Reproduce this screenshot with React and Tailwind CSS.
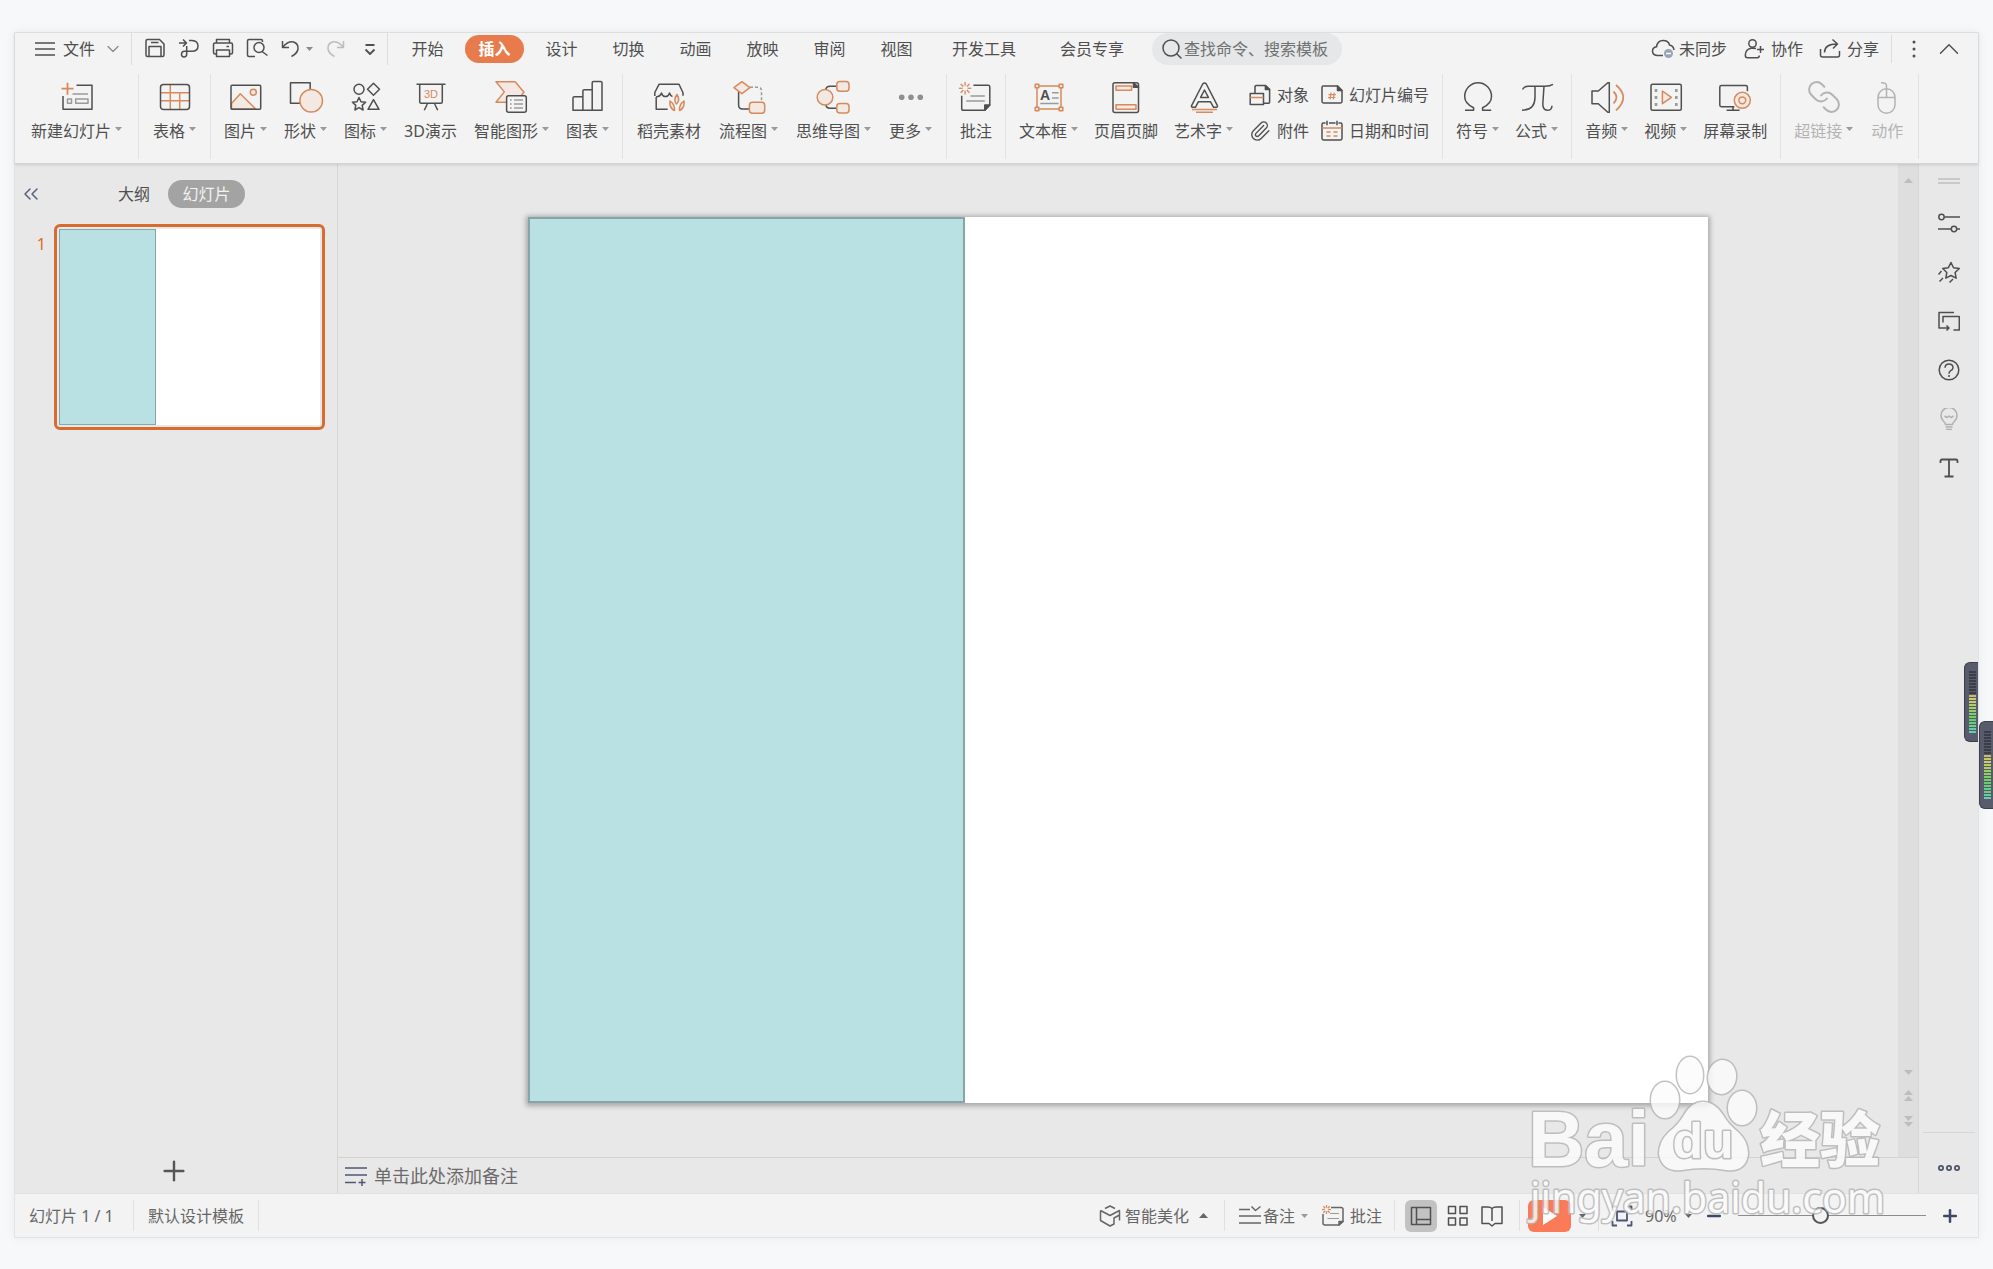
import React, { useState } from "react";
import { ChevronDown, ChevronUp, ChevronsLeft, Link, Paperclip, Plus, Minus, Search } from "lucide-react";

const Caret = ({ up, wide }) => (
  <svg
    width={wide ? 9 : 7}
    height={wide ? 5 : 4}
    viewBox="0 0 7 4"
    preserveAspectRatio="none"
    className={up ? "shrink-0 rotate-180" : "shrink-0"}
    fill="currentColor"
  >
    <path d="M0 0h7L3.5 4z" />
  </svg>
);

const Icon = ({ size = 36, children }) => (
  <svg
    width={size}
    height={size}
    viewBox={`0 0 ${size} ${size}`}
    className="shrink-0"
    fill="none"
    stroke="currentColor"
    strokeWidth="1.5"
    strokeLinejoin="round"
  >
    {children}
  </svg>
);

const orange = { stroke: "#d68a5e" };
const orangeFill = { stroke: "#d68a5e", fill: "#f3e8e2" };
const gray = { stroke: "#9a9a9a" };

const Sun = ({ x, y, r }) => (
  <g transform={`translate(${x} ${y})`} {...orange} strokeWidth="1.3">
    {[0, 45, 90, 135, 180, 225, 270, 315].map((a) => (
      <path key={a} d={`M${r * 0.4} 0H${r}`} transform={`rotate(${a})`} />
    ))}
  </g>
);

const icons = {
  newSlide: (
    <Icon>
      <path d="M17.5 6.3H33v24H4V17" />
      <path d="M8.5 3.7v12M2.5 9.7h12" {...orange} strokeWidth="1.8" />
      <path d="M13.5 15H29M8.5 20h4v4.3h-4zM16.7 20H29v4.3H16.7z" {...gray} />
    </Icon>
  ),
  table: (
    <Icon>
      <path d="M13.3 5.5v25M22.7 13.7v16.8M3.5 13.7h29M3.5 21.7h29" {...orange} />
      <rect x="3.5" y="5.5" width="29" height="25" rx="3" />
    </Icon>
  ),
  picture: (
    <Icon>
      <path d="M3.5 24.5l8.8-9.8 15.4 15.3H3.5z" {...orangeFill} />
      <circle cx="25.3" cy="13.3" r="3" {...orangeFill} />
      <rect x="3" y="6.3" width="29.7" height="24" rx="1" />
    </Icon>
  ),
  shape: (
    <Icon>
      <rect x="2.5" y="3.7" width="19.7" height="20.6" />
      <circle cx="23.2" cy="21.7" r="11.3" {...orangeFill} />
    </Icon>
  ),
  symbols: (
    <Icon>
      <circle cx="11" cy="10.3" r="5" />
      <path d="M25.5 4.3l6 6-6 6-6-6z" />
      <path d="M11 18.5l2 4.2 4.6.6-3.4 3.1.9 4.6-4.1-2.3-4.1 2.3.9-4.6-3.4-3.1 4.6-.6z" />
      <path d="M25.5 20.7l5.5 9.6H20z" />
    </Icon>
  ),
  board: (
    <Icon>
      <path d="M3.5 5.3h29M6.7 5.3v17.5q0 1.5 1.5 1.5h19.6q1.5 0 1.5-1.5V5.3M14.3 25l-3 6.3M21.7 25l3 6.3" />
      <text x="18" y="18.5" fontSize="11" textAnchor="middle" fontFamily="Liberation Sans, sans-serif" fill="#d68a5e" stroke="none">
        3D
      </text>
    </Icon>
  ),
  smart: (
    <Icon>
      <path d="M3 2.7h19.2l8.8 10.5-8 10.1H3l8.3-10.4z" {...orangeFill} />
      <rect x="13.6" y="16.7" width="19.7" height="16.5" rx="2" fill="#f4f4f4" />
      <path d="M17 21h1.7M21 21h9M17 25h1.7M21 25h9M17 29h1.7M21 29h9" {...gray} strokeWidth="1.3" />
    </Icon>
  ),
  chart: (
    <Icon>
      <path d="M4 31.3V19q0-1.3 1.3-1.3h8.6v13.6zM13.9 31.3V12q0-1.3 1.3-1.3h8v20.6zM23.2 31.3V3.7q0-1.3 1.3-1.3h7.2q1.3 0 1.3 1.3v27.6z" />
    </Icon>
  ),
  store: (
    <Icon>
      <path d="M3.8 17V13.5L8 5.3h20l4 8.4v3M5 18q4.500-.5 5.500-4 1 3.600 4 3.600t4-3.600q1 3 3 3.500M5.200 18v12.300h11.500" />
      <path d="M26 15.500q-4 5-.6 9.500 4.200-4 .6-9.500zM19 22q-1 7 4.500 9.500.5-6-4.500-9.500zM33 22q1 7-4.500 9.500-.5-6 4.500-9.500z" {...orangeFill} />
    </Icon>
  ),
  flow: (
    <Icon>
      <path d="M8.6 12.5V26q0 4 4 4h7" />
      <path d="M20 8.3h8q3.5 0 3.5 3.5v11" {...gray} strokeDasharray="3 2" />
      <path d="M11.9 2.7l8 6-8 6-8-6z" {...orangeFill} />
      <rect x="19.4" y="23.3" width="15.3" height="11" rx="3" {...orangeFill} />
    </Icon>
  ),
  mind: (
    <Icon>
      <path d="M10.7 11.5q0-4.2 4.5-4.2h7M10.7 25q0 4.2 4.5 4.2h7" />
      <circle cx="10" cy="18.3" r="7.8" {...orangeFill} />
      <rect x="21.8" y="2.5" width="12.2" height="9.7" rx="3" {...orangeFill} />
      <rect x="21.8" y="24.4" width="12.2" height="9.7" rx="3" {...orangeFill} />
    </Icon>
  ),
  more: (
    <Icon>
      <g fill="#8f8f8f" stroke="none">
        <circle cx="8.7" cy="18.3" r="2.8" />
        <circle cx="18" cy="18.3" r="2.8" />
        <circle cx="27.3" cy="18.3" r="2.8" />
      </g>
    </Icon>
  ),
  comment: (
    <Icon>
      <path d="M15.4 6.3h14.8q1.6 0 1.6 1.6V26l-5 5.3H5.5q-1.8 0-1.8-1.8V16.7" />
      <path d="M31.8 26l-5 5.3V26z" fill="currentColor" />
      <path d="M12.5 17h14.3M8.2 22h18.6" {...gray} />
      <Sun x="7.1" y="9.3" r="6.2" />
    </Icon>
  ),
  textBox: (
    <Icon>
      <path d="M6 7h24v23H6z" {...orange} />
      <path d="M4.2 5.2h3.6v3.6H4.2zM28.2 5.2h3.6v3.6h-3.6zM4.2 28.2h3.6v3.6H4.2zM28.2 28.2h3.6v3.6h-3.6z" {...orangeFill} />
      <text x="9" y="21" fontSize="14" fontWeight="bold" fontFamily="Liberation Sans, sans-serif" fill="currentColor" stroke="none">
        A
      </text>
      <path d="M21 13.7h6.6M21 19h6.6M9.3 24.5h18.3" {...gray} />
    </Icon>
  ),
  header: (
    <Icon>
      <rect x="5" y="3.7" width="25.5" height="29.7" rx="2" />
      <path d="M25.5 3.7v4.5h5z" fill="currentColor" />
      <path d="M8 7h15.6v4.3H8zM8 25.8h20v4.4H8z" {...orangeFill} />
    </Icon>
  ),
  wordArt: (
    <Icon>
      <path d="M16.7 5q1.8-2 3.6 0L31.4 26.6q.4 1.7-1.2 1.7h-2.6l-3.2-5.6h-12l-3 5.6H6.6q-1.6 0-1-1.7zM18.5 11l-3.9 7.4h7.8z" />
      <path d="M6 30.5h25M10 33.2h17" {...orange} />
    </Icon>
  ),
  omega: (
    <Icon>
      <path d="M5 31.3h8.6v-2.6C8 26 4.7 22 4.7 17.4a13.4 13.7 0 0 1 26.8 0c0 4.6-3.3 8.6-8.9 11.3v2.6h8.6" />
    </Icon>
  ),
  pi: (
    <Icon>
      <path d="M3.5 10.5Q5 7.2 9 7.2h17q5 0 8-1.8M16 7.2v11q0 13-13 13M25 7.2L23.8 25q0 6 4.4 6.3 4.6 0 4.8-4.6" />
    </Icon>
  ),
  audio: (
    <Icon>
      <path d="M3 12h6.3l9.5-8.2h1.5v29.4h-1.5l-9.5-8.5H3z" />
      <path d="M24.5 12.5q6 5.8 0 11.8M27 6q14.5 12.3 0 25.3" {...orange} strokeWidth="1.8" />
    </Icon>
  ),
  video: (
    <Icon>
      <rect x="3" y="5.3" width="30.3" height="26" rx="1.5" />
      <path d="M14.4 12l9 6.3-9 6.4z" {...orangeFill} />
      <path d="M8 10v3M8 17v3M8 24v3M28.3 10v3M28.3 17v3M28.3 24v3" {...gray} strokeWidth="2.6" />
    </Icon>
  ),
  record: (
    <Icon>
      <path d="M30.4 12.3V8.2q0-1.6-1.6-1.6H4.4q-1.6 0-1.6 1.6v17.9q0 1.6 1.6 1.6h13M16 27.7V31M9.6 31.2h13" />
      <circle cx="25.3" cy="21.3" r="8" {...orangeFill} />
      <circle cx="25.3" cy="21.3" r="3.4" {...orange} />
    </Icon>
  ),
  link: <Link size={36} strokeWidth={1.3} className="-scale-x-100" />,
  mouse: (
    <Icon>
      <rect x="9" y="9.7" width="17" height="24.5" rx="8.5" />
      <path d="M9 18.5h17M17.5 18.5V7q0-3.5-5.5-3.3" />
    </Icon>
  ),
};

const small = {
  object: (
    <Icon size={22}>
      <path d="M6 9.5V2.9q0-1.4 1.4-1.4h9L20.6 5.500v12.700q0 1-1 1h-5" />
      <path d="M16.400 1.500v4h4.200z" fill="currentColor" />
      <rect x="1.2" y="9.5" width="13.3" height="11" />
      <path d="M1.2 13.5h13.3" {...orange} />
    </Icon>
  ),
  number: (
    <Icon size={22}>
      <path d="M16.5 2H2.4Q1 2 1 3.4v14.2Q1 19 2.4 19h17.2q1.4 0 1.4-1.4V6.5z" />
      <path d="M16.5 2v4.5H21z" fill="currentColor" />
      <path d="M10 8.5L9 15.5M13.3 8.5l-1 7M7.5 10.7h7.3M7 13.5h7.3" {...orange} strokeWidth="1.2" />
    </Icon>
  ),
  clip: <Paperclip size={22} strokeWidth={1.5} />,
  date: (
    <Icon size={22}>
      <path d="M4.5 3H2.4Q1 3 1 4.4v14.2Q1 20 2.4 20h17.2q1.4 0 1.4-1.4V4.4Q21 3 19.6 3h-2.1M8 3h6.5M6 .8v4.5M16 .8v4.5" />
      <path d="M1 8h20M5.5 12h4M12.5 12h4M5.5 16h4M12.5 16h4" {...orange} />
    </Icon>
  ),
};

const quick = [
  {
    name: "保存",
    icon: (
      <Icon size={22}>
        <path d="M3.5 1.5h12l4.5 4.5v11q0 1.5-1.5 1.5h-15Q2 18.5 2 17V3q0-1.5 1.5-1.5zM5 18.5v-10h12v10M7 4.5h7.5" />
      </Icon>
    ),
  },
  {
    name: "输出",
    icon: (
      <Icon size={22}>
        <path d="M1 5h7M5 1.5L8.5 5 5 8.5M11 2.5h3q6 .3 6 5.5t-6 5.3H6.5q-3 .2-3 2.9t2.5 2.8q2.7 0 2.7-3V8" />
      </Icon>
    ),
  },
  {
    name: "打印",
    icon: (
      <Icon size={22}>
        <path d="M4.5 5V1.5h13V5M4.5 16H3q-1.5 0-1.5-1.5v-8Q1.5 5 3 5h16q1.5 0 1.5 1.5v8q0 1.5-1.5 1.5h-1.5M4.5 12h13v6.5h-13zM14.5 8.5H17" />
      </Icon>
    ),
  },
  {
    name: "打印预览",
    icon: (
      <Icon size={22}>
        <path d="M9 18.5H3q-1.500 0-1.500-1.500V3q0-1.500 1.500-1.500h12q1.500 0 1.500 1.500v1" />
        <circle cx="13" cy="9.5" r="5" />
        <path d="M16 13.5l5.5 4" />
      </Icon>
    ),
  },
];

const tabs = ["开始", "插入", "设计", "切换", "动画", "放映", "审阅", "视图"];
const wideTabs = ["开发工具", "会员专享"];

const groups = [
  { className: "px-4", items: [{ label: "新建幻灯片", icon: "newSlide", menu: true }] },
  { className: "px-3.5", items: [{ label: "表格", icon: "table", menu: true }] },
  {
    className: "gap-[17px] px-[13px]",
    items: [
      { label: "图片", icon: "picture", menu: true },
      { label: "形状", icon: "shape", menu: true },
      { label: "图标", icon: "symbols", menu: true },
      { label: "3D演示", icon: "board" },
      { label: "智能图形", icon: "smart", menu: true },
      { label: "图表", icon: "chart", menu: true },
    ],
  },
  {
    className: "gap-[18px] px-3.5",
    items: [
      { label: "稻壳素材", icon: "store" },
      { label: "流程图", icon: "flow", menu: true },
      { label: "思维导图", icon: "mind", menu: true },
      { label: "更多", icon: "more", menu: true },
    ],
  },
  { className: "px-[11px]", items: [{ label: "批注", icon: "comment" }] },
  {
    className: "gap-4 px-[13px]",
    items: [
      { label: "文本框", icon: "textBox", menu: true },
      { label: "页眉页脚", icon: "header" },
      { label: "艺术字", icon: "wordArt", menu: true },
      {
        stack: [
          [
            { label: "对象", icon: "object" },
            { label: "附件", icon: "clip" },
          ],
          [
            { label: "幻灯片编号", icon: "number" },
            { label: "日期和时间", icon: "date" },
          ],
        ],
      },
    ],
  },
  {
    className: "gap-4 px-[13px]",
    items: [
      { label: "符号", icon: "omega", menu: true },
      { label: "公式", icon: "pi", menu: true },
    ],
  },
  {
    className: "gap-4 px-[13px]",
    items: [
      { label: "音频", icon: "audio", menu: true },
      { label: "视频", icon: "video", menu: true },
      { label: "屏幕录制", icon: "record" },
    ],
  },
  {
    className: "gap-4 px-[13px]",
    items: [
      { label: "超链接", icon: "link", menu: true, disabled: true },
      { label: "动作", icon: "mouse", disabled: true },
    ],
  },
];

const RibbonItem = ({ item }) => {
  if (item.stack) {
    return (
      <div className="flex gap-3">
        {item.stack.map((column, i) => (
          <div key={i} className="flex flex-col gap-3 pt-1">
            {column.map((entry) => (
              <button key={entry.label} className="flex items-center gap-1.5 leading-6 whitespace-nowrap">
                {small[entry.icon]}
                {entry.label}
              </button>
            ))}
          </div>
        ))}
      </div>
    );
  }
  return (
    <button
      disabled={item.disabled}
      className="flex flex-col items-center gap-1 whitespace-nowrap disabled:text-[#b3b3b3]"
    >
      {icons[item.icon]}
      <span className="flex gap-1 leading-6">
        {item.label}
        {item.menu && (
          <span className="pt-2 text-[#999999]">
            <Caret />
          </span>
        )}
      </span>
    </button>
  );
};

const Divider = () => <div className="w-px self-stretch bg-[#e0e0e0]"></div>;

const TopBar = ({ tab, setTab }) => (
  <div className="flex h-8 items-center whitespace-nowrap">
    <button className="flex items-center gap-2 pl-5">
      <Icon size={20}>
        <path d="M0 4h20M0 10h20M0 16h20" />
      </Icon>
      文件
      <ChevronDown size={20} strokeWidth={1.5} className="text-[#8a8a8a]" />
    </button>
    <div className="ml-2 flex items-center gap-3 self-stretch border-x border-[#dddddd] pr-1.5 pl-3">
      {quick.map((entry) => (
        <button key={entry.name} aria-label={entry.name}>
          {entry.icon}
        </button>
      ))}
      <button aria-label="撤销" className="flex items-center gap-1">
        <Icon size={22}>
          <path d="M2.5 3v6.5H9M3 9q5-6 10.5-5 5 1.5 4.5 7-.8 4.5-6.5 7.5" />
        </Icon>
        <span className="text-[#8a8a8a]">
          <Caret />
        </span>
      </button>
      <button aria-label="恢复" className="text-[#bdbdbd]">
        <Icon size={22}>
          <path d="M18.5 3v6.5H12M18 9q-5-6-10.5-5-5 1.5-4.5 7 .8 4.5 6.5 7.5" />
        </Icon>
      </button>
      <button aria-label="自定义快速访问工具栏">
        <Icon size={22}>
          <path d="M6.5 7h9M6.5 11.500l4.500 4.500 4.500-4.500" strokeWidth="1.8" />
        </Icon>
      </button>
    </div>
    <nav className="ml-2.5 flex gap-2">
      {tabs.map((name) => (
        <button
          key={name}
          onClick={() => setTab(name)}
          className={
            name === tab
              ? "h-7 w-[59px] rounded-full bg-[#e87b4c] font-bold text-white"
              : "h-7 w-[59px] rounded-full"
          }
        >
          {name}
        </button>
      ))}
      {wideTabs.map((name) => (
        <button key={name} onClick={() => setTab(name)} className="h-7 w-[100px]">
          {name}
        </button>
      ))}
    </nav>
    <label className="ml-2.5 flex h-8 w-[190px] items-center rounded-full bg-[#e6e7e9] pl-2">
      <Search size={24} strokeWidth={1.5} className="shrink-0" />
      <input
        type="text"
        aria-label="查找命令"
        placeholder="查找命令、搜索模板"
        className="w-full bg-transparent outline-none placeholder:text-[#707070]"
      />
    </label>
    <div className="ml-auto flex items-center gap-4 pr-3">
      <button className="flex items-center gap-1">
        <Icon size={24}>
          <path d="M12 18.5H6q-4.5-.5-4.5-4.5 0-3.5 4-4.2Q6.5 3.5 12 3.5T18.5 8q4 .8 4.5 5" />
          <circle cx="17.5" cy="16.5" r="4.5" fill="#9aa3b5" stroke="none" />
          <path d="M15 16.5h5" stroke="#ffffff" />
        </Icon>
        未同步
      </button>
      <button className="flex items-center gap-1.5">
        <Icon size={22}>
          <circle cx="9.5" cy="5.5" r="3.7" />
          <path d="M13 10.5q-2-.5-5-.3-5.5 1-5.7 7 0 2.500 2.200 2.500h9.800q2 0 2-2.200M17.500 8v7M14 11.500h7" />
        </Icon>
        协作
      </button>
      <button className="flex items-center gap-1.5">
        <Icon size={22}>
          <path d="M1.5 11v6q0 2 2 2h15q2 0 2-2v-4M5.5 14.5q0-8.5 12.5-8.5M13.5 1.5L18.5 6l-4.5 4.5" />
        </Icon>
        分享
      </button>
      <div className="-ml-1 h-7 w-px bg-[#dddddd]"></div>
      <button aria-label="更多选项" className="pl-1">
        <svg width="4" height="18" viewBox="0 0 4 18" fill="currentColor">
          <circle cx="2" cy="2" r="1.5" />
          <circle cx="2" cy="9" r="1.5" />
          <circle cx="2" cy="16" r="1.5" />
        </svg>
      </button>
      <button aria-label="收起功能区">
        <ChevronUp size={34} strokeWidth={1} />
      </button>
    </div>
  </div>
);

const SlidePanel = () => (
  <aside className="flex w-[323px] shrink-0 flex-col border-r border-[#d6d6d6]">
    <div className="flex items-center pt-4 pl-1">
      <button aria-label="收起窗格" className="text-[#56607a]">
        <ChevronsLeft size={24} strokeWidth={1.5} />
      </button>
      <button className="ml-[75px] h-7 w-8">大纲</button>
      <button className="ml-[18px] h-7 w-[77px] rounded-full bg-[#a3a3a3] text-[#f2f2f2]">幻灯片</button>
    </div>
    <div className="mt-4 flex pr-3">
      <span className="w-[39px] pt-2 pr-2 text-right text-[#de6a25]">1</span>
      <button
        aria-label="幻灯片 1"
        className="flex h-[206px] flex-1 rounded-md border-3 border-[#d86c30] bg-[#e8e8e8] p-0.5"
      >
        <span className="flex h-full w-full bg-white">
          <span className="h-full w-[37%] border border-[#86a8ac] bg-[#b9e0e2]"></span>
        </span>
      </button>
    </div>
    <button aria-label="新建幻灯片" className="mx-auto mt-auto mb-1.5 pr-1 text-[#555555]">
      <Plus size={32} strokeWidth={1.8} />
    </button>
  </aside>
);

const sideTools = [
  {
    name: "对象属性",
    icon: (
      <Icon size={22}>
        <circle cx="3.5" cy="5" r="2.7" />
        <circle cx="16" cy="17" r="2.7" />
        <path d="M6.5 5H22M0 17h13M19 17h3" />
      </Icon>
    ),
  },
  {
    name: "动画效果",
    icon: (
      <Icon size={22}>
        <path d="M13 1.5l2.5 5.2 5.8.8-4.2 4 1 5.7-5.1-2.7-5.2 2.7 1-5.7-4.100-4 5.700-.8zM.5 13.500l3-3.500M1.500 20.500l3.500-3.500M11.500 21.500l3.500-3.500" />
      </Icon>
    ),
  },
  {
    name: "幻灯片切换",
    icon: (
      <Icon size={22}>
        <path d="M16 2.5H1V18h10M8.5 15.5L11 18l-2.5 2.5M5 12.5v-6h16.3V20h-5.800" />
      </Icon>
    ),
  },
  {
    name: "帮助",
    icon: (
      <Icon size={22}>
        <circle cx="11" cy="11" r="9.8" />
        <path d="M7 8.800q.3-3.800 4-3.800t4 3.500q0 2-2.300 3.200-1.700 1-1.700 3M11 16v2" />
      </Icon>
    ),
  },
  {
    name: "智能提示",
    faded: true,
    icon: (
      <Icon size={22}>
        <path d="M7.5 16.5q0-1.500-2-3.200a8 8 0 1 1 11 0q-2 1.700-2 3.200zM7.500 19h7M8 21.500h6M6.500 8l2.500 1.500L11 8l2 1.500 2.500-1.500" />
      </Icon>
    ),
  },
  {
    name: "文本工具",
    icon: (
      <Icon size={22}>
        <path d="M2.5 6V4q0-1.500 1.500-1.500h14q1.500 0 1.500 1.500v2M11 2.500v17M6.500 19.500h9" strokeWidth="1.8" />
      </Icon>
    ),
  },
];

const SideBar = () => (
  <aside className="flex w-[60px] shrink-0 flex-col items-center border-l border-[#d6d6d6]">
    <div className="mt-3.5 h-1.5 w-[22px] border-y-2 border-[#c9c9c9]"></div>
    <div className="mt-7 flex flex-col gap-[27px]">
      {sideTools.map((tool) => (
        <button key={tool.name} aria-label={tool.name} className={tool.faded ? "text-[#b0b0b0]" : ""}>
          {tool.icon}
        </button>
      ))}
    </div>
    <div className="mt-auto h-px w-[52px] bg-[#d6d6d6]"></div>
    <button aria-label="更多工具" className="pt-[30px] pb-5 text-[#4a546b]">
      <svg width="22" height="10" viewBox="0 0 22 10" fill="none" stroke="currentColor" strokeWidth="1.8">
        <circle cx="3" cy="5" r="2.1" />
        <circle cx="11" cy="5" r="2.1" />
        <circle cx="19" cy="5" r="2.1" />
      </svg>
    </button>
  </aside>
);

const Editor = () => (
  <main className="flex min-w-0 flex-1 flex-col">
    <div className="flex min-h-0 flex-1 border-b border-[#d2d2d2]">
      <div className="flex min-w-0 flex-1 px-[190px] pt-[53px] pb-[54px]">
        <div className="flex flex-1 bg-white shadow-[0_1px_5px_2px_rgba(0,0,0,0.28)]">
          <div className="w-[37%] border-2 border-[#86a5a9] bg-[#b9e0e2]"></div>
        </div>
      </div>
      <div className="flex w-5 flex-col items-center bg-[#dedede] pt-3.5 pb-[30px] text-[#bdbdbd]">
        <Caret up wide />
        <div className="mt-auto flex flex-col items-center gap-[15px]">
          <Caret wide />
          <div className="flex flex-col gap-px">
            <Caret up wide />
            <Caret up wide />
          </div>
          <div className="flex flex-col gap-px">
            <Caret wide />
            <Caret wide />
          </div>
        </div>
      </div>
    </div>
    <div className="flex h-[35px] items-center gap-1.5 pl-1.5">
      <span className="text-[#4d5874]">
        <Icon size={24}>
          <path d="M1 4h22M1 11h22M1 18.5h11M14.5 18.5h7M18 15v7" />
        </Icon>
      </span>
      <input
        type="text"
        aria-label="备注"
        placeholder="单击此处添加备注"
        className="flex-1 bg-transparent text-lg outline-none placeholder:text-[#6b6b6b]"
      />
    </div>
  </main>
);

const StatusBar = ({ zoom, setZoom }) => (
  <footer className="flex h-11 items-center border-t border-[#e2e2e2] bg-[#f3f3f3] py-1.5 whitespace-nowrap text-[#666666]">
    <span className="w-[118px] pl-3.5">幻灯片 1 / 1</span>
    <Divider />
    <span className="px-3.5">默认设计模板</span>
    <Divider />
    <div className="ml-auto flex items-center self-stretch">
      <button className="mr-4 flex items-center gap-1">
        <Icon size={22}>
          <path d="M6 3.5L11 1l5 2.5M1.5 5.5l9.500 5 9.500-5v10M1.500 5.500v10L11 21l4-2v-6l5.500-3" />
        </Icon>
        智能美化
        <span className="ml-1.5">
          <Caret up wide />
        </span>
      </button>
      <Divider />
      <button className="ml-3.5 flex items-center gap-0.5">
        <Icon size={22}>
          <path d="M0 4.5h11M12.5 1.5l4 4 5-4M0 11h22M0 18h22" />
        </Icon>
        备注
        <span className="ml-1 text-[#999999]">
          <Caret />
        </span>
      </button>
      <button className="mr-3 ml-3.5 flex items-center gap-1.5">
        <Icon size={22}>
          <path d="M9 2.5h10q2 0 2 2v12L17 20H3q-2 0-2-2V9" />
          <path d="M21 16.5L17 20v-3.500z" fill="currentColor" />
          <path d="M8 8.5h9M5.500 13.500H17" {...gray} strokeWidth="1.2" />
          <Sun x="4.5" y="4.5" r="4.5" />
        </Icon>
        批注
      </button>
      <Divider />
      <div className="flex items-center px-2.5 text-[#505050]">
        <button aria-label="普通视图" className="mr-2.5 flex h-8 w-8 items-center justify-center rounded-md bg-[#c2c2c2]">
          <Icon size={22}>
            <path d="M1.5 2.5h19v17h-19zM6.500 2.500v17M6.500 14.500h14" />
          </Icon>
        </button>
        <button aria-label="幻灯片浏览" className="mr-3">
          <Icon size={22}>
            <path d="M1.5 1.5h7v7h-7zM13 1.5h7v7h-7zM1.5 13h7v7h-7zM13 13h7v7h-7z" />
          </Icon>
        </button>
        <button aria-label="阅读视图" className="mr-1.5">
          <Icon size={22}>
            <path d="M11 3.5Q9.500 2 7 2H1v16.500h7L11 21l3-2.500h7V2h-6q-2.500 0-4 1.500zM11 3.500V16" />
          </Icon>
        </button>
      </div>
      <Divider />
      <button aria-label="从当前幻灯片播放" className="mx-2 flex h-8 w-[43px] items-center justify-center rounded-md bg-[#fb7a58]">
        <svg width="14" height="20" viewBox="0 0 14 20" fill="#ffffff">
          <path d="M0 1v18l14-9z" />
        </svg>
      </button>
      <span className="mr-3">
        <Caret />
      </span>
      <Divider />
      <button aria-label="最佳缩放比例" className="mx-3 text-[#4a5673]">
        <Icon size={22}>
          <path d="M1.5 6V1.5H6M16 1.5h4.5V6M20.5 16v4.5H16M6 20.5H1.5V16M6 6.5h10v9H6z" strokeWidth="1.8" />
        </Icon>
      </button>
      <label className="flex items-center">
        <select
          aria-label="缩放比例"
          value={zoom}
          onChange={(event) => setZoom(Number(event.target.value))}
          className="w-10 appearance-none bg-transparent outline-none"
        >
          {[50, 75, 90, 100, 150, 200].map((value) => (
            <option key={value} value={value}>
              {value}%
            </option>
          ))}
        </select>
        <Caret />
      </label>
      <button aria-label="缩小" className="ml-3 text-[#3d4866]">
        <Minus size={20} strokeWidth={3} />
      </button>
      <div className="mx-3.5 flex w-[188px] items-center">
        <input
          type="range"
          aria-label="缩放"
          min="10"
          max="194"
          value={zoom}
          onChange={(event) => setZoom(Number(event.target.value))}
          className="h-4 w-full appearance-none bg-[linear-gradient(#8c8c8c,#8c8c8c)] bg-[length:100%_1px] bg-center bg-no-repeat [&::-webkit-slider-thumb]:h-[17px] [&::-webkit-slider-thumb]:w-[17px] [&::-webkit-slider-thumb]:appearance-none [&::-webkit-slider-thumb]:rounded-full [&::-webkit-slider-thumb]:border-2 [&::-webkit-slider-thumb]:border-[#555555] [&::-webkit-slider-thumb]:bg-[#f3f3f3]"
        />
      </div>
      <button aria-label="放大" className="mr-[18px] text-[#3d4866]">
        <Plus size={20} strokeWidth={3} />
      </button>
    </div>
  </footer>
);

// volume meters docked on the screen edge
const Meter = ({ bars, dark }) => (
  <div className="flex h-full flex-col justify-center gap-px rounded-l-md border-y border-l border-[#3c3f4a] bg-[#575b6b] pr-0.5 pl-1">
    {Array.from({ length: bars }, (_, i) => {
      const hue = 48 + ((i - dark) / (bars - dark)) * 122;
      return (
        <span
          key={i}
          className="h-0.5 w-full shrink-0"
          style={{ background: i < dark ? "#3b3e49" : `hsl(${hue} 52% 60%)` }}
        ></span>
      );
    })}
  </div>
);

const Watermark = () => (
  <svg
    width="380"
    height="180"
    viewBox="0 0 380 180"
    className="pointer-events-none absolute right-[93px] bottom-[39px] opacity-80"
    fill="#fcfcfc"
    stroke="#b4b4b4"
    strokeWidth="3"
    strokeLinejoin="round"
    paintOrder="stroke"
  >
    <ellipse cx="145" cy="50" rx="14" ry="18" />
    <ellipse cx="170" cy="25" rx="13" ry="18" />
    <ellipse cx="202" cy="27" rx="14" ry="17" transform="rotate(8 202 27)" />
    <ellipse cx="222" cy="58" rx="14" ry="17" />
    <path d="M183 52q12 0 20 13 5 9 15 17 10 9 10 22-2 18-22 16-22-4-44 0-20 2-23-16 0-13 10-22 10-8 15-17 7-13 19-13z" />
    <g fontFamily="Liberation Sans, sans-serif" fontWeight="bold">
      <text x="8" y="116" fontSize="78">
        Bai
      </text>
      <text x="183" y="108" fontSize="50" textAnchor="middle">
        du
      </text>
    </g>
    <text x="240" y="112" fontSize="60" fontWeight="900" fontFamily="Noto Sans CJK SC, sans-serif">
      经验
    </text>
    <text x="10" y="163" fontSize="41" fontFamily="Noto Sans, sans-serif">
      jingyan.baidu.com
    </text>
  </svg>
);

const App = () => {
  const [tab, setTab] = useState("插入");
  const [zoom, setZoom] = useState(90);

  return (
    <div className="relative flex h-screen flex-col overflow-hidden bg-[#f6f8fa] pt-8 pr-3.5 pb-[31px] pl-3.5 font-['Noto_Sans','Noto_Sans_CJK_SC',sans-serif] text-base text-[#4f4f4f]">
      <div className="flex min-h-0 flex-1 flex-col border border-[#e2e3e4] bg-[#e8e8e8] shadow-[0_0_10px_rgba(0,0,0,0.06)]">
        <header className="z-10 border-b border-[#d4d4d4] bg-[#f3f3f3] pb-1 shadow-[0_1px_3px_rgba(0,0,0,0.12)]">
          <TopBar tab={tab} setTab={setTab} />
          <div className="mt-[9px] flex h-[85px]">
            {groups.map((group, i) => (
              <div key={i} className={`flex border-r border-[#e2e2e2] pt-[5px] ${group.className}`}>
                {group.items.map((item, j) => (
                  <RibbonItem key={j} item={item} />
                ))}
              </div>
            ))}
          </div>
        </header>
        <div className="flex min-h-0 flex-1">
          <SlidePanel />
          <Editor />
          <SideBar />
        </div>
        <StatusBar zoom={zoom} setZoom={setZoom} />
      </div>
      <div className="absolute top-[662px] right-[15px] h-20 w-3.5">
        <Meter bars={21} dark={8} />
      </div>
      <div className="absolute top-[721px] right-0 h-[88px] w-3.5">
        <Meter bars={23} dark={8} />
      </div>
      <Watermark />
    </div>
  );
};

export default App;
